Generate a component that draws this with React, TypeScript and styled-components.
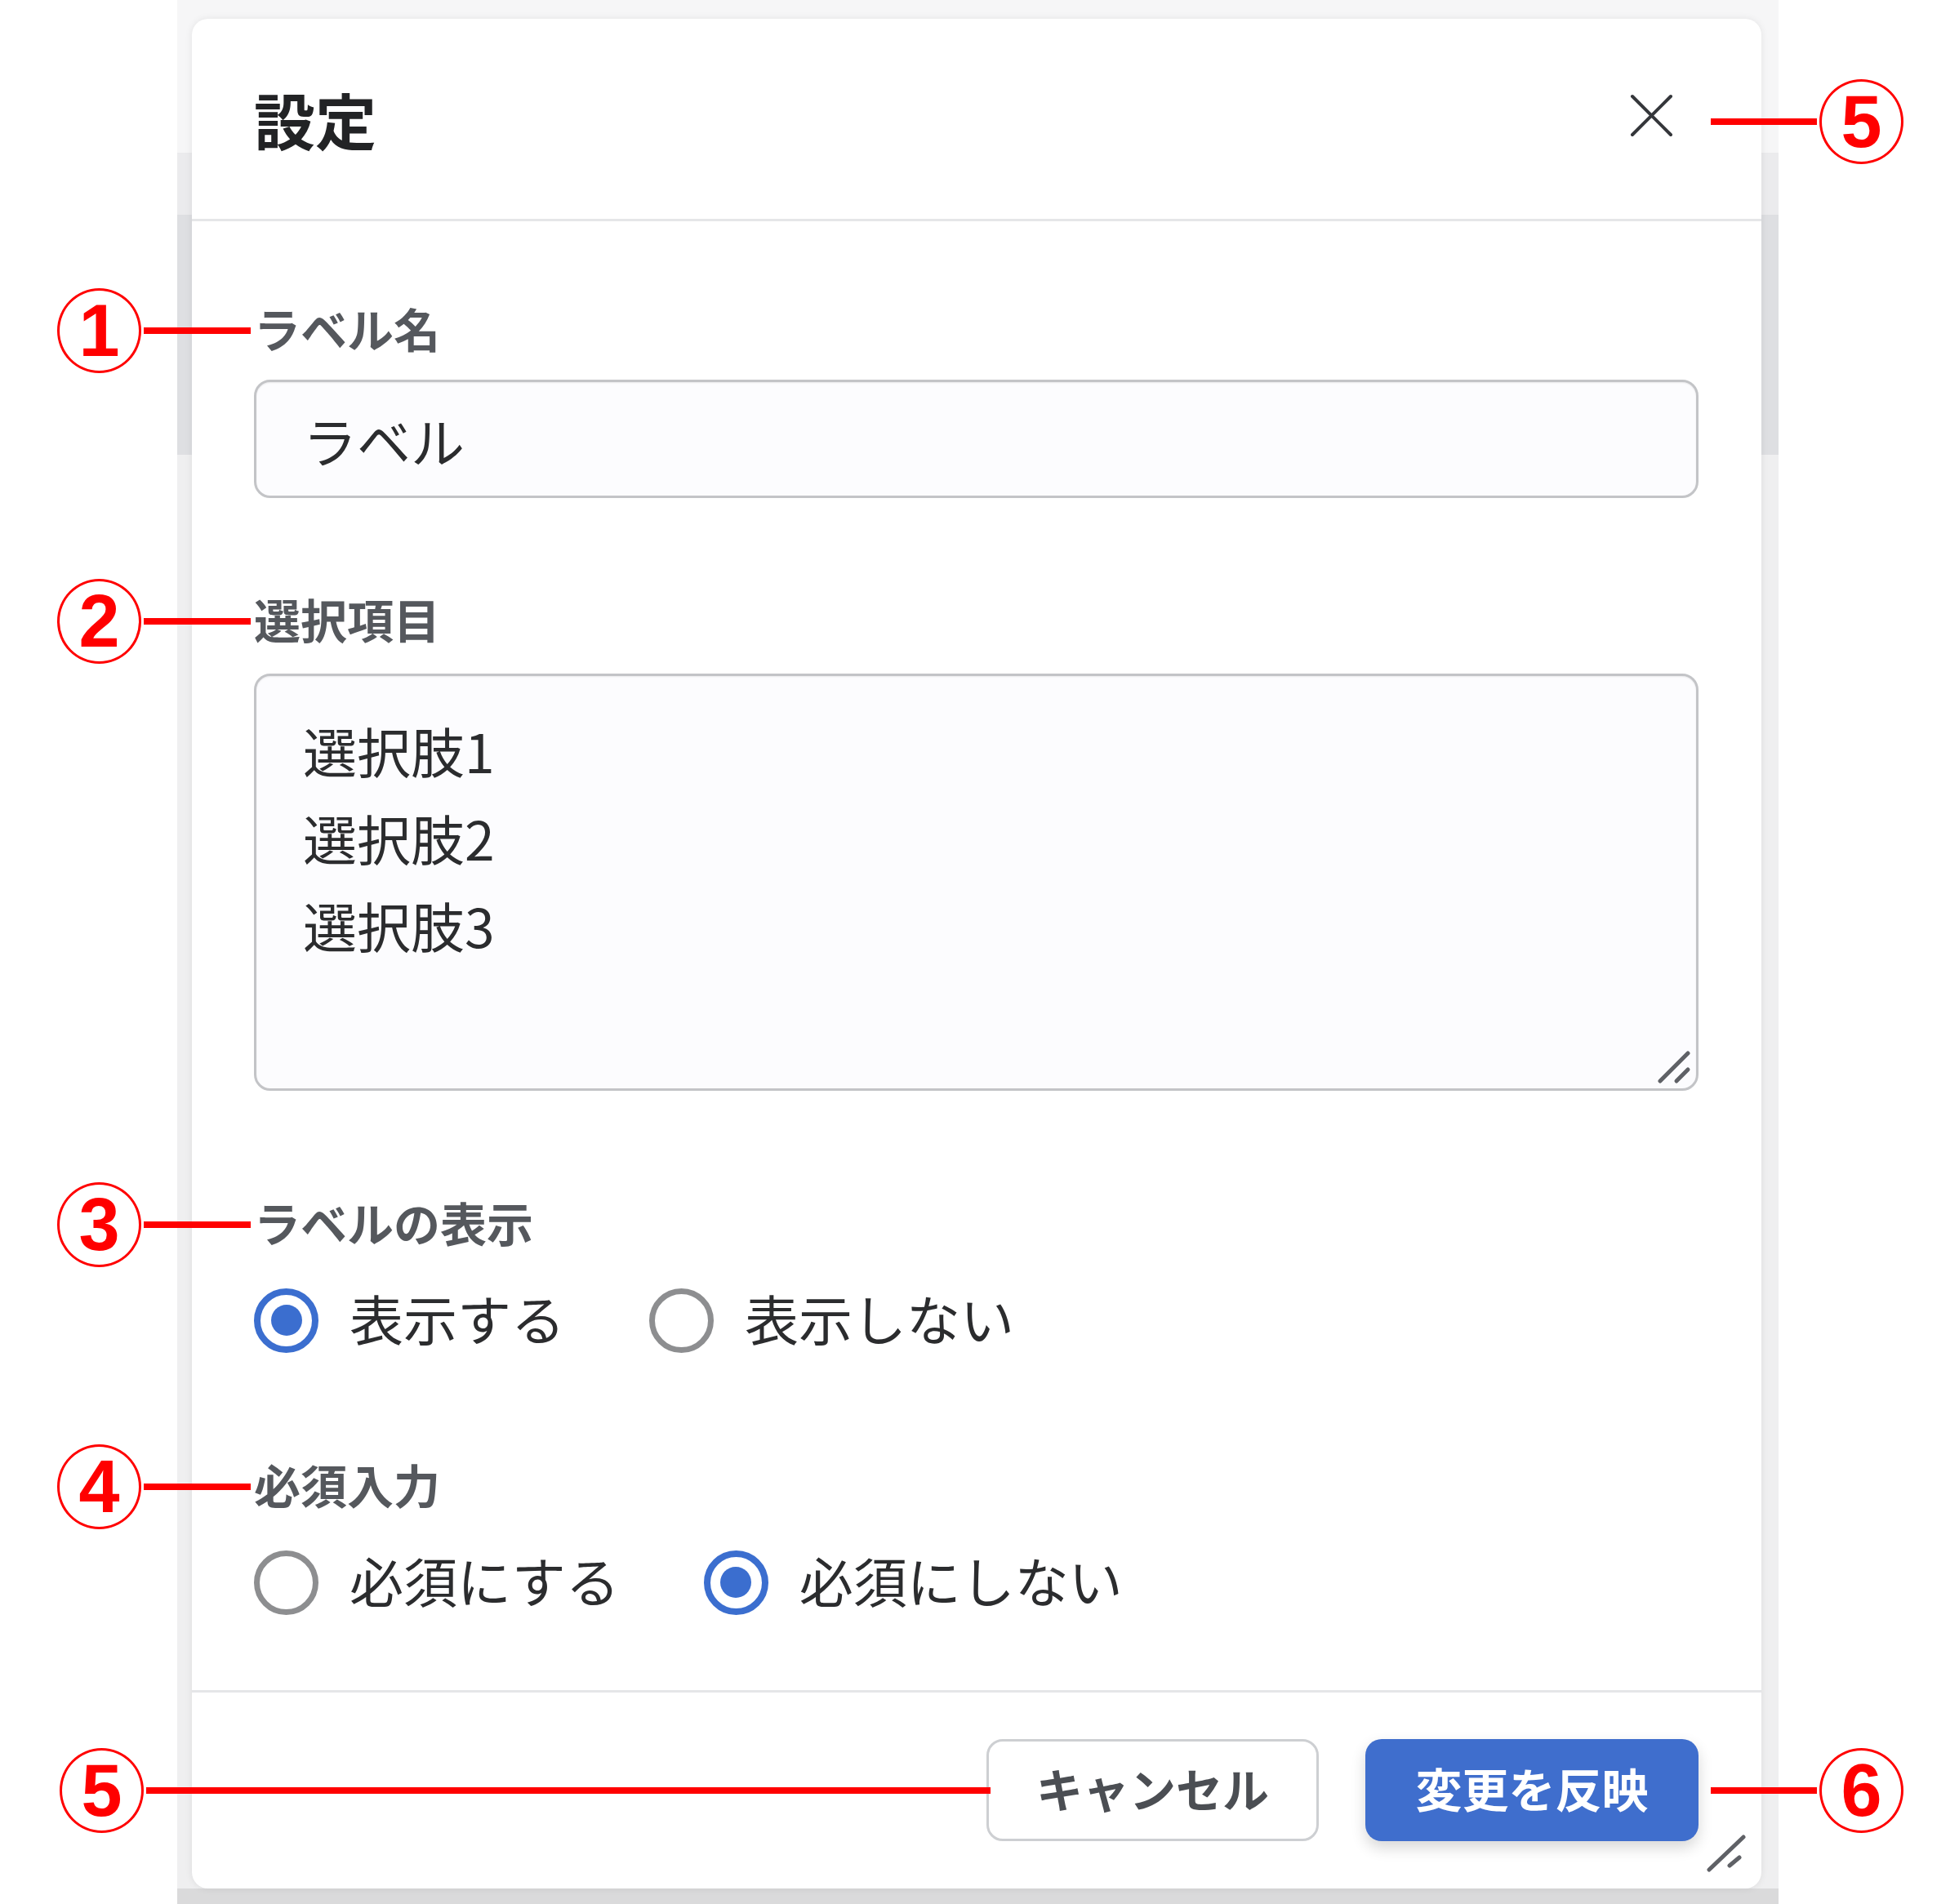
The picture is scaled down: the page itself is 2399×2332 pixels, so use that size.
import React from "react";
import styled, { createGlobalStyle } from "styled-components";

const GlobalStyle = createGlobalStyle`
  html, body {
    margin: 0;
    padding: 0;
    background: #ffffff;
  }
  body {
    font-family: "Noto Sans CJK JP", "Noto Sans", sans-serif;
  }
  * {
    box-sizing: border-box;
  }
`;

type Side = "left" | "right";

const Callout = ({
  num,
  side,
  line,
  gap,
  dy = 0,
}: {
  num: string;
  side: Side;
  line: number;
  gap: number;
  dy?: number;
}) => (
  <CalloutWrap $side={side} $gap={gap} $dy={dy}>
    <CircleNum>{num}</CircleNum>
    <RedLine $w={line} />
  </CalloutWrap>
);

const Grip = ({ long, short }: { long: string; short: string }) => (
  <svg width="50" height="50" viewBox="0 0 50 50">
    <path d={long} stroke="#5f6166" strokeWidth="5" strokeLinecap="round" />
    <path d={short} stroke="#5f6166" strokeWidth="5" strokeLinecap="round" />
  </svg>
);

const App = () => {
  return (
    <Page>
      <GlobalStyle />
      <Under>
        <Dialog>
          <Header>
            <Title>設定</Title>
            <CloseButton aria-label="close">
              <svg width="53" height="53" viewBox="0 0 53 53">
                <path d="M3 3 L50 50 M50 3 L3 50" stroke="#35373b" strokeWidth="4" strokeLinecap="round" />
              </svg>
              <Callout num="5" side="right" line={130} gap={46} dy={7} />
            </CloseButton>
          </Header>

          <Body>
            <Field $space={0} $gap={18}>
              <Label>
                ラベル名
                <Callout num="1" side="left" line={131} gap={4} />
              </Label>
              <TextInput defaultValue="ラベル" />
            </Field>

            <Field $space={109} $gap={22}>
              <Label>
                選択項目
                <Callout num="2" side="left" line={131} gap={4} />
              </Label>
              <AreaBox>
                <TextArea defaultValue={"選択肢1\n選択肢2\n選択肢3"} />
                <AreaGrip>
                  <Grip long="M6 42 L40 8" short="M26 42 L40 28" />
                </AreaGrip>
              </AreaBox>
            </Field>

            <Field $space={122} $gap={20}>
              <Label>
                ラベルの表示
                <Callout num="3" side="left" line={131} gap={4} />
              </Label>
              <RadioRow>
                <RadioOption>
                  <RadioMark $checked />
                  <RadioText>表示する</RadioText>
                </RadioOption>
                <RadioOption>
                  <RadioMark />
                  <RadioText>表示しない</RadioText>
                </RadioOption>
              </RadioRow>
            </Field>

            <Field $space={107} $gap={20}>
              <Label>
                必須入力
                <Callout num="4" side="left" line={131} gap={4} />
              </Label>
              <RadioRow>
                <RadioOption>
                  <RadioMark />
                  <RadioText>必須にする</RadioText>
                </RadioOption>
                <RadioOption>
                  <RadioMark $checked />
                  <RadioText>必須にしない</RadioText>
                </RadioOption>
              </RadioRow>
            </Field>
          </Body>

          <Footer>
            <CancelButton>
              キャンセル
              <Callout num="5" side="left" line={1034} gap={-2} />
            </CancelButton>
            <PrimaryButton>
              変更を反映
              <Callout num="6" side="right" line={130} gap={15} />
            </PrimaryButton>
            <DialogGrip>
              <Grip long="M3 45 L45 5" short="M28 40 L40 30" />
            </DialogGrip>
          </Footer>
        </Dialog>
      </Under>
    </Page>
  );
};

export default App;

const Page = styled.div`
  width: 2399px;
  height: 2332px;
  padding-left: 217px;
  background: #ffffff;
  overflow: hidden;
`;

const Under = styled.div`
  width: 1961px;
  height: 2332px;
  padding: 23px 21px 0 18px;
  background: linear-gradient(
    to bottom,
    #f6f6f7 0,
    #f6f6f7 187px,
    #ebebed 187px,
    #ebebed 263px,
    #dedfe2 263px,
    #dedfe2 557px,
    #efeff0 557px,
    #efeff0 2313px,
    #dadadb 2313px
  );
`;

const Dialog = styled.div`
  position: relative;
  width: 1922px;
  background: #ffffff;
  border-radius: 20px;
  box-shadow: 0 0 10px rgba(0, 0, 0, 0.08);
`;

const Header = styled.div`
  height: 248px;
  display: flex;
  align-items: center;
  justify-content: space-between;
  padding: 0 77px 0 76px;
  border-bottom: 3px solid #e5e6e8;
`;

const Title = styled.h2`
  margin: 0;
  font-size: 75px;
  font-weight: 700;
  line-height: 1;
  color: #222325;
`;

const CloseButton = styled.button`
  position: relative;
  width: 53px;
  height: 53px;
  margin-right: 31px;
  margin-top: -8px;
  padding: 0;
  border: none;
  background: none;
  display: flex;
  align-items: center;
  justify-content: center;
  cursor: pointer;
`;

const Body = styled.div`
  display: flex;
  flex-direction: column;
  padding: 92px 77px 77px 76px;
`;

const Field = styled.div<{ $space: number; $gap: number }>`
  display: flex;
  flex-direction: column;
  gap: ${(p) => p.$gap}px;
  margin-top: ${(p) => p.$space}px;
`;

const Label = styled.div`
  position: relative;
  font-size: 57px;
  font-weight: 700;
  line-height: 76px;
  padding-bottom: 8px;
  color: #55585d;
`;

const TextInput = styled.input`
  width: 100%;
  height: 145px;
  padding: 0 57px;
  border: 3px solid #c3c4c7;
  border-radius: 20px;
  background: #fcfcfe;
  box-shadow: inset 0 1px 2px rgba(0, 0, 0, 0.08);
  font-family: "Noto Sans CJK JP", "Noto Sans", sans-serif;
  font-size: 66px;
  color: #2b2c2e;
  outline: none;
`;

const AreaBox = styled.div`
  position: relative;
`;

const TextArea = styled.textarea`
  display: block;
  width: 100%;
  height: 511px;
  padding: 37px 57px;
  border: 3px solid #c3c4c7;
  border-radius: 20px;
  background: #fcfcfe;
  box-shadow: inset 0 1px 2px rgba(0, 0, 0, 0.08);
  font-family: "Noto Sans CJK JP", "Noto Sans", sans-serif;
  font-size: 66px;
  line-height: 107px;
  color: #2b2c2e;
  resize: none;
  outline: none;
`;

const AreaGrip = styled.div`
  position: absolute;
  right: 3px;
  bottom: 4px;
  width: 50px;
  height: 50px;
`;

const RadioRow = styled.div`
  display: flex;
  align-items: center;
  gap: 103px;
  height: 110px;
`;

const RadioOption = styled.label`
  display: flex;
  align-items: center;
  gap: 38px;
  font-size: 66px;
  line-height: 1;
  color: #2b2c2e;
`;

const RadioText = styled.span`
  margin-top: -8px;
`;

const RadioMark = styled.span<{ $checked?: boolean }>`
  flex-shrink: 0;
  width: 79px;
  height: 79px;
  border-radius: 50%;
  border: ${(p) => (p.$checked ? "8px solid #3b6ecf" : "7px solid #8d8e90")};
  display: flex;
  align-items: center;
  justify-content: center;

  &::after {
    content: "";
    display: ${(p) => (p.$checked ? "block" : "none")};
    width: 38px;
    height: 38px;
    border-radius: 50%;
    background: #3b6ecf;
  }
`;

const Footer = styled.div`
  display: flex;
  justify-content: flex-end;
  gap: 57px;
  padding: 57px 77px 58px 76px;
  border-top: 3px solid #e5e6e8;
`;

const CancelButton = styled.button`
  position: relative;
  width: 407px;
  height: 125px;
  padding: 0 0 8px;
  border: 3px solid #cdcfd2;
  border-radius: 20px;
  background: #ffffff;
  font-family: "Noto Sans CJK JP", "Noto Sans", sans-serif;
  font-size: 57px;
  font-weight: 700;
  color: #4b4e53;
  cursor: pointer;
`;

const PrimaryButton = styled.button`
  position: relative;
  width: 408px;
  height: 125px;
  padding: 0 0 8px;
  border: none;
  border-radius: 20px;
  background: #3f6ecd;
  box-shadow: 0 8px 18px rgba(0, 0, 0, 0.16);
  font-family: "Noto Sans CJK JP", "Noto Sans", sans-serif;
  font-size: 57px;
  font-weight: 700;
  color: #ffffff;
  cursor: pointer;
`;

const DialogGrip = styled.div`
  position: absolute;
  right: 17px;
  bottom: 18px;
  width: 50px;
  height: 50px;
`;

const CalloutWrap = styled.div<{ $side: Side; $gap: number; $dy: number }>`
  position: absolute;
  top: 50%;
  transform: translateY(calc(-50% + ${(p) => p.$dy}px));
  display: flex;
  align-items: center;
  gap: 3px;
  pointer-events: none;
  ${(p) =>
    p.$side === "left"
      ? `right: calc(100% + ${p.$gap}px); flex-direction: row;`
      : `left: calc(100% + ${p.$gap}px); flex-direction: row-reverse;`}
`;

const CircleNum = styled.div`
  flex-shrink: 0;
  width: 103px;
  height: 104px;
  border: 3px solid #ff0000;
  border-radius: 50%;
  background: #ffffff;
  display: flex;
  align-items: center;
  justify-content: center;
  font-family: "Liberation Sans", Arial, sans-serif;
  font-size: 90px;
  font-weight: 700;
  line-height: 1;
  color: #ff0000;
`;

const RedLine = styled.div<{ $w: number }>`
  flex-shrink: 0;
  width: ${(p) => p.$w}px;
  height: 8px;
  background: #ff0000;
`;
